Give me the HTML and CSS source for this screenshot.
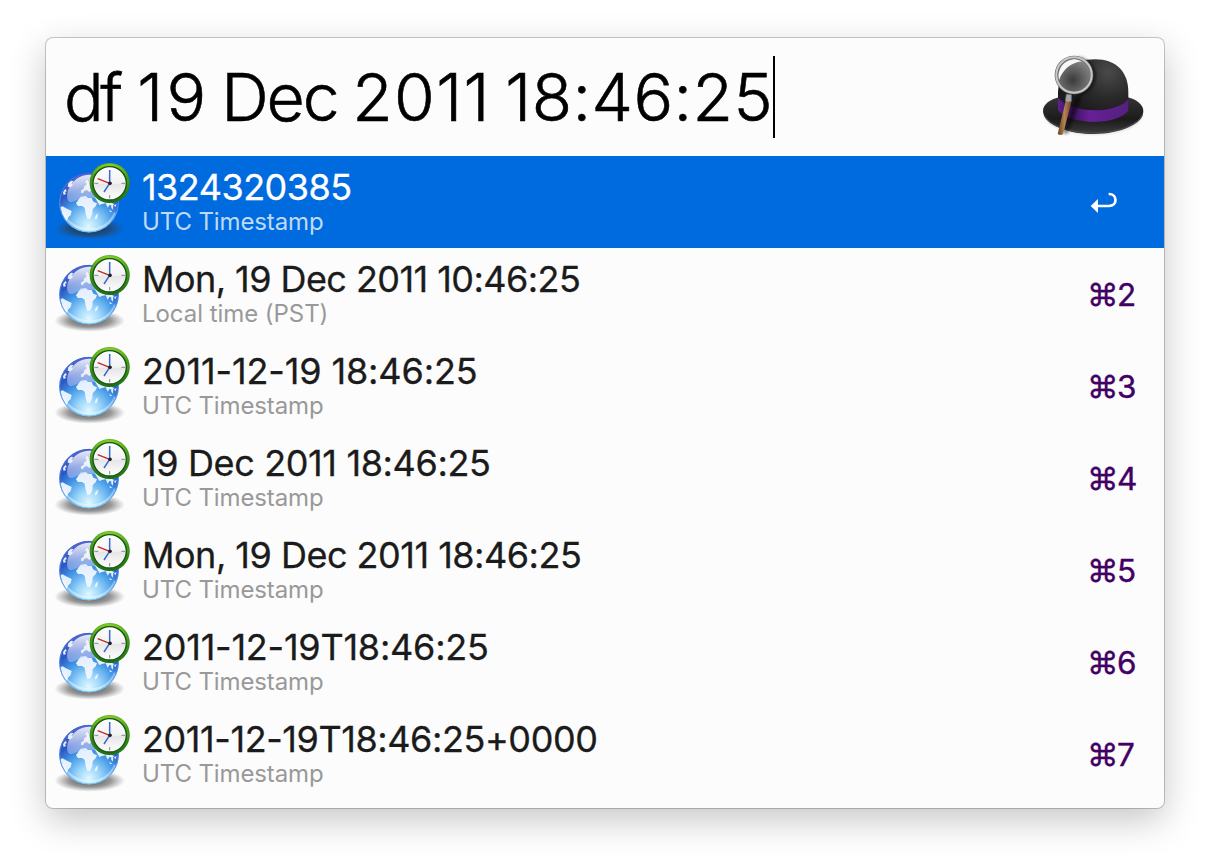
FILE: index.html
```
<!DOCTYPE html>
<html lang="en">
<head>
<meta charset="utf-8">
<title>Launcher</title>
<link rel="stylesheet" href="styles.css">
</head>
<body>
<svg class="defs" width="0" height="0" aria-hidden="true">
  <defs>
    <radialGradient id="sea" cx="128" cy="205" r="160" gradientUnits="userSpaceOnUse">
      <stop offset="0" stop-color="#e0f8ff"/><stop offset=".22" stop-color="#9cd6fa"/><stop offset=".48" stop-color="#459ae8"/><stop offset=".72" stop-color="#2b57c4"/><stop offset="1" stop-color="#5568cc"/>
    </radialGradient>
    <linearGradient id="gloss" x1="0" y1="0" x2="0" y2="1">
      <stop offset="0" stop-color="#fff" stop-opacity=".85"/><stop offset=".5" stop-color="#f4f4ff" stop-opacity=".6"/><stop offset="1" stop-color="#c8d0f8" stop-opacity=".4"/>
    </linearGradient>
    <linearGradient id="rim" x1="0" y1="0" x2="0" y2="1">
      <stop offset="0" stop-color="#4060d8"/><stop offset="1" stop-color="#68c0f8"/>
    </linearGradient>
    <radialGradient id="ground">
      <stop offset="0" stop-color="#222" stop-opacity=".8"/><stop offset=".6" stop-color="#333" stop-opacity=".5"/><stop offset="1" stop-color="#444" stop-opacity="0"/>
    </radialGradient>
    <linearGradient id="green" x1="0" y1="0" x2="0" y2="1">
      <stop offset="0" stop-color="#8ad028"/><stop offset=".3" stop-color="#4da31c"/><stop offset="1" stop-color="#1c6e14"/>
    </linearGradient>
    <linearGradient id="face" x1="0" y1="0" x2="0" y2="1">
      <stop offset="0" stop-color="#fff"/><stop offset=".5" stop-color="#f2f2f2"/><stop offset=".52" stop-color="#e6e6e6"/><stop offset="1" stop-color="#fff"/>
    </linearGradient>
    <clipPath id="ball"><circle cx="129" cy="134" r="87"/></clipPath>
    <symbol id="globe-clock" viewBox="0 -6 264 276">
      <ellipse cx="131" cy="212" rx="106" ry="33" fill="url(#ground)"/>
      <circle cx="129" cy="134" r="89" fill="url(#sea)"/>
      <g clip-path="url(#ball)">
        <path fill="#f3f8ff" fill-opacity=".93" d="M40 148l10-3 10 6 17 8-3 12-8 8-4 12-8 6-16-12zM51 103l5-8 4-2 2 7-5 2 3 6-7 3zM67 76l8-8 7 1-5 8 4 3-8 8-8-2zM97 125l7-9 15-2 7 5 11 1 5 11 11 5-4 9-9 9-1 14-7 14-8 1-5-16-3-18-8-5-12 0-6-8zM151 171l5-5-2 14-6 5-1-7zM105 105l0-8 8-4 1-7 9-8 6-9 10-8 9 6-4 22 8 8-3 7-8-1-6-5-5 4-8-6-7 3-4 6zM118 74l4-8 5 2-3 10zM149 103l16 3 12 24 14 1 13 7-5 7-8-5-6 9-6-13-9 1-10 4-13-22zM198 139l4 4-2 12-5-8zM204 141l8-2-4 9zM190 155l9 6-7 1z"/>
        <path fill="url(#gloss)" d="M64 120C60 92 84 52 130 50c38 0 60 20 70 45-44 42-62 18-88 24-18 4-32 16-42 12-4-2-5-5-6-11z"/>
        <path fill="none" stroke="#fff" stroke-opacity=".4" stroke-width="7" d="M51 164c24 62 130 72 156 0"/>
      </g>
      <circle cx="129" cy="134" r="88" fill="none" stroke="url(#rim)" stroke-width="3"/>
      <circle cx="191" cy="75" r="60" fill="url(#green)"/>
      <circle cx="191" cy="75" r="59" fill="none" stroke="#2c7d16" stroke-width="2" stroke-opacity=".5"/>
      <circle cx="191" cy="76" r="50" fill="url(#face)" stroke="#155712" stroke-width="4"/>
      <path d="M191 36v8M191 111v10M145 76h12M226 76h12" stroke="#888" stroke-width="3"/>
      <path d="M191 36v40L174 102" fill="none" stroke="#3768d8" stroke-width="4.5"/>
      <path d="M155 62l36 14" stroke="#c0282c" stroke-width="4"/>
      <circle cx="192" cy="76" r="5.5" fill="#222"/>
    </symbol>
  </defs>
</svg>

<main class="window">
  <header class="search">
    <div class="query"><span class="w1">df</span><span class="s1"> </span><span class="w2">1</span>9<span class="s2"> </span><span class="w3">Dec</span><span class="s3"> </span><span class="w4">2011</span><span class="s3"> </span><span class="w5">18:46:25</span></div><span class="caret"></span>
    <svg class="hat" viewBox="30 30 330 270" aria-hidden="true">
      <defs>
        <radialGradient id="crown" cx="235" cy="95" r="130" gradientUnits="userSpaceOnUse"><stop offset="0" stop-color="#4a4a4a"/><stop offset=".6" stop-color="#2b2a2b"/><stop offset="1" stop-color="#1e1b1d"/></radialGradient>
        <radialGradient id="lens" cx="128" cy="120" r="62" gradientUnits="userSpaceOnUse"><stop offset="0" stop-color="#3b3b3b"/><stop offset="1" stop-color="#858585"/></radialGradient>
        <linearGradient id="band"><stop offset="0" stop-color="#5d2190"/><stop offset=".2" stop-color="#3a1359"/><stop offset=".45" stop-color="#662098"/><stop offset="1" stop-color="#54207f"/></linearGradient>
        <linearGradient id="wood"><stop offset="0" stop-color="#69401f"/><stop offset=".5" stop-color="#b58253"/><stop offset="1" stop-color="#74462a"/></linearGradient>
        <linearGradient id="brim" x1="0" y1="0" x2="0" y2="1"><stop offset="0" stop-color="#353535"/><stop offset=".6" stop-color="#1c1a1b"/><stop offset="1" stop-color="#3c3b3c"/></linearGradient>
        <filter id="soft" x="-20%" y="-20%" width="140%" height="140%"><feGaussianBlur stdDeviation="5"/></filter>
      </defs>
      <ellipse cx="190" cy="222" rx="146" ry="60" fill="#000" opacity=".2" filter="url(#soft)"/>
      <path fill="url(#brim)" d="M39 212c0-20 24-35 50-41h202c26 6 49 22 49 42 0 36-66 69-150 69S39 248 39 212z"/>
      <path fill="none" stroke="#484748" stroke-width="4" d="M43 226c13 30 72 52 147 52s135-23 147-53"/>
      <path fill="url(#crown)" d="M84 195v-39c4-65 40-98 112-98 62 0 99 36 99 100v38c-30 32-180 32-211-1z"/>
      <path fill="url(#band)" d="M84 172c34 48 172 54 211 5v36c-40 44-172 44-211-2z"/>
      <path d="M137 168l18 4-42 110-15-2z" fill="#000" opacity=".45" filter="url(#soft)"/>
      <path d="M145 55c35 10 55 36 45 66-6 22-26 38-44 43" fill="none" stroke="#000" stroke-width="12" opacity=".5" filter="url(#soft)"/>
      <path fill="url(#wood)" d="M107 184l17 2-25 97q-8 5-16-1z"/>
      <path fill="#a5a5a5" stroke="#777" stroke-width="2" d="M109 163l15 1v20q-9 5-18 0z"/>
      <circle cx="132" cy="105" r="50" fill="url(#lens)"/>
      <path fill="#f7f7f7" d="M87 121c-7-32 14-63 50-63l20 6C119 69 98 90 87 121z"/>
      <circle cx="132" cy="105" r="53" fill="none" stroke="#6c6c6c" stroke-width="10"/>
      <circle cx="132" cy="105" r="53" fill="none" stroke="#c7c8c9" stroke-width="6"/>
    </svg>
  </header>

  <ul class="results">
    <li class="row selected">
      <svg class="icon"><use href="#globe-clock"/></svg>
      <div class="text"><div class="title t1">1324320385</div><div class="sub">UTC Timestamp</div></div>
      <svg class="return" viewBox="0 0 84 66" aria-hidden="true"><path fill="#fff" d="M2 42l22-21v42z"/><path fill="none" stroke="#fff" stroke-width="8" d="M22 42h35c26 0 26-36 0-36h-1"/></svg>
    </li>
    <li class="row">
      <svg class="icon"><use href="#globe-clock"/></svg>
      <div class="text"><div class="title t2">Mon, 19 Dec 2011 10:46:25</div><div class="sub local">Local time (PST)</div></div>
      <div class="key">⌘2</div>
    </li>
    <li class="row">
      <svg class="icon"><use href="#globe-clock"/></svg>
      <div class="text"><div class="title t3">2011-12-19 18:46:25</div><div class="sub">UTC Timestamp</div></div>
      <div class="key">⌘3</div>
    </li>
    <li class="row">
      <svg class="icon"><use href="#globe-clock"/></svg>
      <div class="text"><div class="title t4">19 Dec 2011 18:46:25</div><div class="sub">UTC Timestamp</div></div>
      <div class="key">⌘4</div>
    </li>
    <li class="row">
      <svg class="icon"><use href="#globe-clock"/></svg>
      <div class="text"><div class="title t5">Mon, 19 Dec 2011 18:46:25</div><div class="sub">UTC Timestamp</div></div>
      <div class="key">⌘5</div>
    </li>
    <li class="row">
      <svg class="icon"><use href="#globe-clock"/></svg>
      <div class="text"><div class="title t6">2011-12-19T18:46:25</div><div class="sub">UTC Timestamp</div></div>
      <div class="key">⌘6</div>
    </li>
    <li class="row">
      <svg class="icon"><use href="#globe-clock"/></svg>
      <div class="text"><div class="title t7">2011-12-19T18:46:25+0000</div><div class="sub">UTC Timestamp</div></div>
      <div class="key">⌘7</div>
    </li>
  </ul>
</main>
</body>
</html>
```
FILE: styles.css
```
* { box-sizing: border-box; }
body {
  margin: 0;
  padding: 38px 46px 0;
  height: 862px;
  overflow: hidden;
  background: #fff;
  font-family: Inter, "Liberation Sans", sans-serif;
}
.defs { display: block; }
.window {
  width: 1118px;
  height: 770px;
  background: #fcfcfc;
  border-radius: 7px;
  box-shadow: 0 0 0 1px rgba(0, 0, 0, .2), 0 12px 36px rgba(0, 0, 0, .23);
}
.search {
  display: flex;
  align-items: center;
  height: 118px;
  padding: 0 14px 0 18px;
}
.query {
  font-size: 66px;
  line-height: 82px;
  font-weight: 300;
  color: #000;
  white-space: nowrap;
  letter-spacing: 0;
  -webkit-text-stroke: .6px #000;
}
.w1 { letter-spacing: -3.6px; }
.s1 { letter-spacing: -.6px; }
.w2 { letter-spacing: 3.2px; }
.s2 { letter-spacing: -3.6px; }
.w3 { letter-spacing: -2px; }
.s3 { letter-spacing: -4.2px; }
.w4 { letter-spacing: 1.4px; }
.w5 { letter-spacing: .4px; }
.caret { width: 2px; height: 82px; background: #000; }
.hat { width: 110px; height: 90px; margin-left: auto; margin-top: -4px; }
.results { list-style: none; margin: 0; padding: 0; }
.row {
  display: flex;
  height: 92px;
  padding-right: 28px;
}
.icon { width: 88px; height: 92px; flex: none; }
.text { padding: 9px 0 0 8px; white-space: nowrap; }
.title {
  font-size: 36px;
  line-height: 44px;
  color: #1b1b1b;
  -webkit-text-stroke: .3px currentColor;
}
.t1 { letter-spacing: -.52px; }
.t2 { letter-spacing: -.56px; }
.t3 { letter-spacing: -.12px; }
.t4 { letter-spacing: -.37px; }
.t5 { letter-spacing: -.5px; }
.t6 { letter-spacing: -.22px; }
.t7 { letter-spacing: -.42px; }
.sub { font-size: 24px; line-height: 28px; margin-top: -1px; letter-spacing: -.12px; color: #999; }
.local { letter-spacing: -.05px; }
.key {
  width: 49px;
  margin-left: auto;
  padding-top: 27px;
  font-size: 31.5px;
  line-height: 40px;
  font-weight: 400;
  letter-spacing: -1.5px;
  -webkit-text-stroke: .4px currentColor;
  color: #430064;
  white-space: nowrap;
}
.selected { background: #006bdf; }
.selected .title { color: #fff; }
.selected .sub { color: #bfdaf7; }
.return { width: 28px; height: 22px; margin: 36px 18px 0 auto; }
```
